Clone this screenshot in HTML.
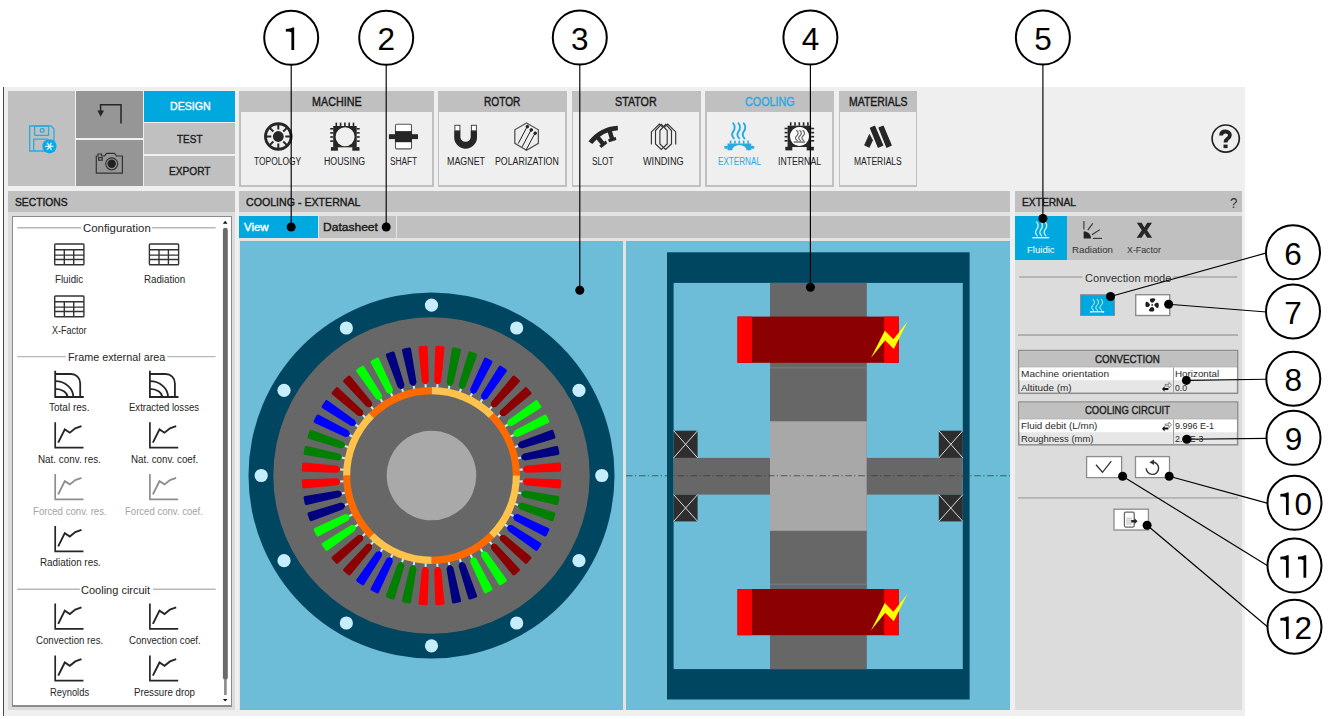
<!DOCTYPE html>
<html><head><meta charset="utf-8"><style>
html,body{margin:0;padding:0;background:#fff;width:1339px;height:719px;overflow:hidden;}
body{position:relative;font-family:"Liberation Sans",sans-serif;}
body>div{position:absolute;}
svg text{font-family:"Liberation Sans",sans-serif;}
</style></head><body>
<div style="left:3px;top:87px;width:1px;height:629px;background:#474747;"></div><div style="left:4px;top:87px;width:1241px;height:629px;background:#efefef;"></div><div style="left:8px;top:90.5px;width:67px;height:95.5px;background:#c0c0c0;"></div><div style="left:76px;top:90.5px;width:67px;height:47px;background:#969696;"></div><div style="left:76px;top:139.5px;width:67px;height:46.5px;background:#969696;"></div><div style="left:144px;top:90.5px;width:91px;height:31px;background:#00a8e0;"></div><div style="left:144px;top:123px;width:91px;height:30.5px;background:#c0c0c0;"></div><div style="left:144px;top:155.5px;width:91px;height:30.5px;background:#c0c0c0;"></div><div style="left:169.90px;top:101.21px;font-size:11.8px;line-height:11.8px;color:#ffffff;font-weight:normal;white-space:nowrap;transform-origin:0 0;transform:scaleX(0.8969);-webkit-text-stroke:0.4px #ffffff;">DESIGN</div><div style="left:177.00px;top:133.61px;font-size:11.8px;line-height:11.8px;color:#1a1a1a;font-weight:normal;white-space:nowrap;transform-origin:0 0;transform:scaleX(0.8449);-webkit-text-stroke:0.4px #1a1a1a;">TEST</div><div style="left:169.40px;top:165.81px;font-size:11.8px;line-height:11.8px;color:#1a1a1a;font-weight:normal;white-space:nowrap;transform-origin:0 0;transform:scaleX(0.8589);-webkit-text-stroke:0.4px #1a1a1a;">EXPORT</div><div style="left:239px;top:90.5px;width:194.5px;height:96px;background:#c0c0c0;"></div><div style="left:240.5px;top:112px;width:191.5px;height:73px;background:#efefef;"></div><div style="left:311.60px;top:96.04px;font-size:12px;line-height:12px;color:#1a1a1a;font-weight:normal;white-space:nowrap;transform-origin:0 0;transform:scaleX(0.8964);-webkit-text-stroke:0.4px #1a1a1a;">MACHINE</div><div style="left:437.5px;top:90.5px;width:129.0px;height:96px;background:#c0c0c0;"></div><div style="left:439.0px;top:112px;width:126.0px;height:73px;background:#efefef;"></div><div style="left:484.00px;top:96.04px;font-size:12px;line-height:12px;color:#1a1a1a;font-weight:normal;white-space:nowrap;transform-origin:0 0;transform:scaleX(0.8424);-webkit-text-stroke:0.4px #1a1a1a;">ROTOR</div><div style="left:571.5px;top:90.5px;width:129.0px;height:96px;background:#c0c0c0;"></div><div style="left:573.0px;top:112px;width:126.0px;height:73px;background:#efefef;"></div><div style="left:614.70px;top:96.04px;font-size:12px;line-height:12px;color:#1a1a1a;font-weight:normal;white-space:nowrap;transform-origin:0 0;transform:scaleX(0.8935);-webkit-text-stroke:0.4px #1a1a1a;">STATOR</div><div style="left:705px;top:90.5px;width:128.5px;height:96px;background:#c0c0c0;"></div><div style="left:706.5px;top:112px;width:125.5px;height:73px;background:#efefef;"></div><div style="left:744.60px;top:96.04px;font-size:12px;line-height:12px;color:#29abe2;font-weight:normal;white-space:nowrap;transform-origin:0 0;transform:scaleX(0.8981);-webkit-text-stroke:0.4px #29abe2;">COOLING</div><div style="left:838.5px;top:90.5px;width:78.5px;height:96px;background:#c0c0c0;"></div><div style="left:840.0px;top:112px;width:75.5px;height:73px;background:#efefef;"></div><div style="left:848.80px;top:96.04px;font-size:12px;line-height:12px;color:#1a1a1a;font-weight:normal;white-space:nowrap;transform-origin:0 0;transform:scaleX(0.8716);-webkit-text-stroke:0.4px #1a1a1a;">MATERIALS</div><div style="left:254.20px;top:156.73px;font-size:10px;line-height:10px;color:#222;font-weight:normal;white-space:nowrap;transform-origin:0 0;transform:scaleX(0.8441);">TOPOLOGY</div><div style="left:323.90px;top:156.73px;font-size:10px;line-height:10px;color:#222;font-weight:normal;white-space:nowrap;transform-origin:0 0;transform:scaleX(0.8808);">HOUSING</div><div style="left:389.70px;top:156.73px;font-size:10px;line-height:10px;color:#222;font-weight:normal;white-space:nowrap;transform-origin:0 0;transform:scaleX(0.8264);">SHAFT</div><div style="left:446.80px;top:156.73px;font-size:10px;line-height:10px;color:#222;font-weight:normal;white-space:nowrap;transform-origin:0 0;transform:scaleX(0.8882);">MAGNET</div><div style="left:494.80px;top:156.73px;font-size:10px;line-height:10px;color:#222;font-weight:normal;white-space:nowrap;transform-origin:0 0;transform:scaleX(0.8787);">POLARIZATION</div><div style="left:591.80px;top:156.73px;font-size:10px;line-height:10px;color:#222;font-weight:normal;white-space:nowrap;transform-origin:0 0;transform:scaleX(0.8228);">SLOT</div><div style="left:642.90px;top:156.73px;font-size:10px;line-height:10px;color:#222;font-weight:normal;white-space:nowrap;transform-origin:0 0;transform:scaleX(0.9136);">WINDING</div><div style="left:717.70px;top:156.73px;font-size:10px;line-height:10px;color:#29abe2;font-weight:normal;white-space:nowrap;transform-origin:0 0;transform:scaleX(0.8134);">EXTERNAL</div><div style="left:778.20px;top:156.73px;font-size:10px;line-height:10px;color:#222;font-weight:normal;white-space:nowrap;transform-origin:0 0;transform:scaleX(0.8699);">INTERNAL</div><div style="left:854.20px;top:156.73px;font-size:10px;line-height:10px;color:#222;font-weight:normal;white-space:nowrap;transform-origin:0 0;transform:scaleX(0.8548);">MATERIALS</div><svg style="position:absolute;left:1195px;top:110px" width="60" height="60" viewBox="1195 110 60 60"><circle cx="1225.7" cy="138.6" r="13.6" fill="none" stroke="#222" stroke-width="1.7"/><path d="M1221.1,135.4 C1221.1,132.8 1222.9,131.5 1225.5,131.5 C1228.3,131.5 1229.9,133.1 1229.9,135.2 C1229.9,137.3 1228.4,138.2 1227.1,139.1 C1226,139.9 1225.6,140.6 1225.6,142.6" fill="none" stroke="#222" stroke-width="3.8"/><rect x="1223.5" y="144.6" width="4.1" height="3.5" fill="#222"/></svg><div style="left:8px;top:191px;width:227px;height:21px;background:#c0c0c0;"></div><div style="left:14.60px;top:196.77px;font-size:11.5px;line-height:11.5px;color:#1a1a1a;font-weight:normal;white-space:nowrap;transform-origin:0 0;transform:scaleX(0.8949);-webkit-text-stroke:0.4px #1a1a1a;">SECTIONS</div><div style="left:8px;top:212px;width:227px;height:498px;background:#dcdcdc;"></div><div style="left:11.5px;top:215.5px;width:220.5px;height:491px;background:#8c8c8c;"></div><div style="left:13px;top:217px;width:217.5px;height:488px;background:#ffffff;"></div><div style="left:239px;top:191px;width:771px;height:21px;background:#c0c0c0;"></div><div style="left:245.60px;top:197.05px;font-size:11.4px;line-height:11.4px;color:#1a1a1a;font-weight:normal;white-space:nowrap;transform-origin:0 0;transform:scaleX(0.9326);-webkit-text-stroke:0.4px #1a1a1a;">COOLING - EXTERNAL</div><div style="left:239px;top:212px;width:771px;height:3.5px;background:#e3e3e3;"></div><div style="left:239px;top:215.5px;width:771px;height:22.5px;background:#c0c0c0;"></div><div style="left:239px;top:215.5px;width:78.5px;height:22.5px;background:#00a8e0;"></div><div style="left:317.5px;top:215.5px;width:1px;height:22.5px;background:#e4e4e4;"></div><div style="left:395.5px;top:215.5px;width:1.5px;height:22.5px;background:#e4e4e4;"></div><div style="left:244.40px;top:221.71px;font-size:11.8px;line-height:11.8px;color:#ffffff;font-weight:normal;white-space:nowrap;transform-origin:0 0;transform:scaleX(0.9715);-webkit-text-stroke:0.4px #ffffff;">View</div><div style="left:323.20px;top:221.71px;font-size:11.8px;line-height:11.8px;color:#1a1a1a;font-weight:normal;white-space:nowrap;transform-origin:0 0;transform:scaleX(1.0202);-webkit-text-stroke:0.4px #1a1a1a;">Datasheet</div><div style="left:239px;top:238px;width:771px;height:472px;background:#e3e3e3;"></div><div style="left:239.5px;top:240.5px;width:383.5px;height:469.5px;background:#6dbcd8;"></div><div style="left:626px;top:240.5px;width:384px;height:469.5px;background:#6dbcd8;"></div><div style="left:1015px;top:191px;width:227px;height:21px;background:#c0c0c0;"></div><div style="left:1021.70px;top:197.05px;font-size:11.4px;line-height:11.4px;color:#1a1a1a;font-weight:normal;white-space:nowrap;transform-origin:0 0;transform:scaleX(0.8980);-webkit-text-stroke:0.4px #1a1a1a;">EXTERNAL</div><div style="left:1229.90px;top:195.40px;font-size:15px;line-height:15px;color:#333;font-weight:normal;white-space:nowrap;transform-origin:0 0;transform:scaleX(0.8875);">?</div><div style="left:1015px;top:212px;width:227px;height:3.5px;background:#e3e3e3;"></div><div style="left:1015px;top:215.5px;width:227px;height:44px;background:#c0c0c0;"></div><div style="left:1015px;top:215.5px;width:52px;height:44px;background:#00a8e0;"></div><div style="left:1015px;top:259.5px;width:227px;height:450.5px;background:#dcdcdc;"></div><svg style="position:absolute;left:0px;top:85px" width="1000" height="110" viewBox="0 85 1000 110"><g fill="none" stroke="#29abe2" stroke-width="1.3"><path d="M29.7,126 H51 L54,129 V151 H29.7 Z"/><rect x="34.6" y="126" width="14" height="9.3" rx="0.6"/><rect x="40.4" y="128.6" width="3.6" height="3.6" rx="1"/><path d="M33.7,151 V139.2 H48"/></g><circle cx="49.4" cy="146.3" r="7.1" fill="#06a9ec"/><g stroke="#d6f2ff" stroke-width="1.35"><path d="M45.3,146.3 H53.5 M47.3,142.8 L51.5,149.8 M47.3,149.8 L51.5,142.8"/></g><path d="M121,123.5 V104.8 H100.6 V111" fill="none" stroke="#262626" stroke-width="1.5"/><path d="M97.4,110.5 H104 L100.7,116.8 Z" fill="#262626"/><g fill="none" stroke="#333" stroke-width="1.2"><path d="M96.3,156 H98 V154 H101.5 V156 H104.5 L106.5,153.4 H114.5 L116.5,156 H122.4 V173.2 H96.3 Z"/><rect x="98.6" y="157.6" width="3.6" height="2.6"/><circle cx="111.7" cy="163.8" r="6"/></g><circle cx="111.7" cy="163.8" r="4.2" fill="#222"/><circle cx="278.3" cy="136.5" r="12.8" fill="none" stroke="#262626" stroke-width="2.9"/><circle cx="278.3" cy="136.5" r="5.4" fill="#262626"/><g stroke="#262626" stroke-width="2"><line x1="278.30" y1="129.50" x2="278.30" y2="124.70"/><line x1="283.25" y1="131.55" x2="286.64" y2="128.16"/><line x1="285.30" y1="136.50" x2="290.10" y2="136.50"/><line x1="283.25" y1="141.45" x2="286.64" y2="144.84"/><line x1="278.30" y1="143.50" x2="278.30" y2="148.30"/><line x1="273.35" y1="141.45" x2="269.96" y2="144.84"/><line x1="271.30" y1="136.50" x2="266.50" y2="136.50"/><line x1="273.35" y1="131.55" x2="269.96" y2="128.16"/></g><rect x="333.20000000000005" y="126.00000000000001" width="23.5" height="21.299999999999997" fill="#262626"/><rect x="330.90000000000003" y="147.10000000000002" width="7" height="3.6" fill="#262626"/><rect x="352.30000000000007" y="147.10000000000002" width="7.2" height="3.6" fill="#262626"/><circle cx="345.1" cy="136.8" r="9.5" fill="#efefef"/><g stroke="#262626" stroke-width="1.6"><line x1="336.30" y1="122.60000000000001" x2="336.30" y2="126.00000000000001"/><line x1="340.60" y1="122.60000000000001" x2="340.60" y2="126.00000000000001"/><line x1="344.90" y1="122.60000000000001" x2="344.90" y2="126.00000000000001"/><line x1="349.20" y1="122.60000000000001" x2="349.20" y2="126.00000000000001"/><line x1="353.50" y1="122.60000000000001" x2="353.50" y2="126.00000000000001"/><line x1="330.20000000000005" y1="128.80" x2="333.20000000000005" y2="128.80"/><line x1="356.70000000000005" y1="128.80" x2="359.70000000000005" y2="128.80"/><line x1="330.20000000000005" y1="132.90" x2="333.20000000000005" y2="132.90"/><line x1="356.70000000000005" y1="132.90" x2="359.70000000000005" y2="132.90"/><line x1="330.20000000000005" y1="137.00" x2="333.20000000000005" y2="137.00"/><line x1="356.70000000000005" y1="137.00" x2="359.70000000000005" y2="137.00"/><line x1="330.20000000000005" y1="141.10" x2="333.20000000000005" y2="141.10"/><line x1="356.70000000000005" y1="141.10" x2="359.70000000000005" y2="141.10"/></g><rect x="395.5" y="124.2" width="16" height="24.7" rx="1.2" fill="#fff" stroke="#555" stroke-width="1.1"/><rect x="395" y="131.1" width="16.9" height="11.1" fill="#262626"/><rect x="388.9" y="134.2" width="29.1" height="4.9" fill="#262626"/><path d="M454.2,130.8 V137.3 A11.4,11.4 0 0 0 477,137.3 V130.8 H470.7 V137.3 A5.2,5.2 0 0 1 460.4,137.3 V130.8 Z" fill="#262626"/><rect x="454.9" y="125.3" width="5" height="5.5" fill="#fff" stroke="#444" stroke-width="1"/><rect x="471.4" y="125.3" width="5" height="5.5" fill="#fff" stroke="#444" stroke-width="1"/><polygon points="526.60,123.00 538.38,129.80 538.38,143.40 526.60,150.20 514.82,143.40 514.82,129.80" fill="none" stroke="#555" stroke-width="1.3"/><g stroke="#222" stroke-width="1"><line x1="518.20" y1="143.60" x2="527.20" y2="126.60"/><circle cx="527.40" cy="126.60" r="1.3" fill="#222"/><line x1="522.10" y1="146.90" x2="531.10" y2="129.90"/><circle cx="531.30" cy="129.90" r="1.3" fill="#222"/><line x1="526.00" y1="150.20" x2="535.00" y2="133.20"/><circle cx="535.20" cy="133.20" r="1.3" fill="#222"/></g><path d="M588.53,141.29 A39.4,39.4 0 0 1 617.73,125.67 L618.00,130.36 A34.7,34.7 0 0 0 592.29,144.12 Z" fill="#262626"/><path d="M596.04,138.71 L600.74,144.56 L599.26,145.75 L601.37,147.90 L607.30,143.14 L605.65,140.61 L604.17,141.80 L599.47,135.95 Z" fill="#262626"/><path d="M607.58,131.67 L609.76,138.85 L607.94,139.40 L609.10,142.18 L616.37,139.97 L615.78,137.02 L613.97,137.57 L611.79,130.39 Z" fill="#262626"/><g fill="none" stroke="#333" stroke-width="1.15" stroke-linejoin="miter"><path d="M651.4,144.4 V131.9 L659.4,124 L662.6,127.2"/><path d="M675.7,144.4 V131.9 L667.7,124 L664.5,127.2"/><path d="M661.4,124.4 L667.2,130.6 V143.9 L661.3,149.5 L655.5,143.9 V130.6 Z"/><path d="M665.7,124.4 L671.5,130.6 V143.9 L665.6,149.5 L659.9,143.9 V130.6 Z"/></g><path d="M733.20,123.2 C735.40,126.24 735.10,128.67 733.40,131.10 C731.70,133.54 731.30,135.66 733.90,138.40" fill="none" stroke="#29abe2" stroke-width="1.9" stroke-linecap="round"/><path d="M738.50,123.2 C740.70,126.24 740.40,128.67 738.70,131.10 C737.00,133.54 736.60,135.66 739.20,138.40" fill="none" stroke="#29abe2" stroke-width="1.9" stroke-linecap="round"/><path d="M743.80,123.2 C746.00,126.24 745.70,128.67 744.00,131.10 C742.30,133.54 741.90,135.66 744.50,138.40" fill="none" stroke="#29abe2" stroke-width="1.9" stroke-linecap="round"/><path d="M727.5,143.4 H751.2 V150.3 H746.6 A7.2,5.4 0 0 0 732.2,150.3 H727.5 Z" fill="#29abe2"/><rect x="724.4" y="145.9" width="3.4" height="2.8" fill="#29abe2"/><rect x="751" y="145.9" width="3.2" height="2.8" fill="#29abe2"/><rect x="729.80" y="140.6" width="1.6" height="3" fill="#29abe2"/><rect x="734.15" y="140.6" width="1.6" height="3" fill="#29abe2"/><rect x="738.50" y="140.6" width="1.6" height="3" fill="#29abe2"/><rect x="742.85" y="140.6" width="1.6" height="3" fill="#29abe2"/><rect x="747.20" y="140.6" width="1.6" height="3" fill="#29abe2"/><rect x="787.6" y="125.7" width="23.5" height="21.299999999999997" fill="#262626"/><rect x="785.3000000000001" y="146.8" width="7" height="3.6" fill="#262626"/><rect x="806.7" y="146.8" width="7.2" height="3.6" fill="#262626"/><circle cx="799.5" cy="136.5" r="9.5" fill="#efefef"/><g stroke="#262626" stroke-width="1.6"><line x1="790.70" y1="122.3" x2="790.70" y2="125.7"/><line x1="795.00" y1="122.3" x2="795.00" y2="125.7"/><line x1="799.30" y1="122.3" x2="799.30" y2="125.7"/><line x1="803.60" y1="122.3" x2="803.60" y2="125.7"/><line x1="807.90" y1="122.3" x2="807.90" y2="125.7"/><line x1="784.6" y1="128.50" x2="787.6" y2="128.50"/><line x1="811.1" y1="128.50" x2="814.1" y2="128.50"/><line x1="784.6" y1="132.60" x2="787.6" y2="132.60"/><line x1="811.1" y1="132.60" x2="814.1" y2="132.60"/><line x1="784.6" y1="136.70" x2="787.6" y2="136.70"/><line x1="811.1" y1="136.70" x2="814.1" y2="136.70"/><line x1="784.6" y1="140.80" x2="787.6" y2="140.80"/><line x1="811.1" y1="140.80" x2="814.1" y2="140.80"/></g><circle cx="799.5" cy="136.3" r="9.2" fill="#fafafa"/><path d="M796.60,130.5 C798.80,132.50 798.50,134.10 796.80,135.70 C795.10,137.30 794.70,138.70 797.30,140.50" fill="none" stroke="#6a6a6a" stroke-width="1.2" stroke-linecap="round"/><path d="M799.80,130.5 C802.00,132.50 801.70,134.10 800.00,135.70 C798.30,137.30 797.90,138.70 800.50,140.50" fill="none" stroke="#6a6a6a" stroke-width="1.2" stroke-linecap="round"/><path d="M803.00,130.5 C805.20,132.50 804.90,134.10 803.20,135.70 C801.50,137.30 801.10,138.70 803.70,140.50" fill="none" stroke="#6a6a6a" stroke-width="1.2" stroke-linecap="round"/><rect x="793.8" y="141.2" width="11.4" height="1.6" fill="#7a7a7a"/><path d="M864.6,145.2 L869.4,134.4 L872.5,140.2 L869.3,147.3 Z" fill="#262626" stroke="#262626" stroke-width="0.8" stroke-linejoin="round"/><path d="M870.6,128.2 L874.6,126.4 L882.6,145.2 L878.3,147.1 Z" fill="#262626" stroke="#262626" stroke-width="1.4" stroke-linejoin="round"/><path d="M879.2,128 L883.1,126.3 L891.1,145.2 L886.8,147.1 Z" fill="#262626" stroke="#262626" stroke-width="1.4" stroke-linejoin="round"/></svg><svg style="position:absolute;left:0px;top:210px" width="240" height="500" viewBox="0 210 240 500"><line x1="17.2" y1="227.7" x2="81.2" y2="227.7" stroke="#b8b8b8" stroke-width="1.4"/><line x1="151.8" y1="227.7" x2="215.6" y2="227.7" stroke="#b8b8b8" stroke-width="1.4"/><line x1="17.2" y1="356.6" x2="66" y2="356.6" stroke="#b8b8b8" stroke-width="1.4"/><line x1="167.2" y1="356.6" x2="215.6" y2="356.6" stroke="#b8b8b8" stroke-width="1.4"/><line x1="17.2" y1="589.3" x2="79.8" y2="589.3" stroke="#b8b8b8" stroke-width="1.4"/><line x1="153" y1="589.3" x2="215.6" y2="589.3" stroke="#b8b8b8" stroke-width="1.4"/><g fill="none" stroke="#333" stroke-width="1.4"><rect x="54.699999999999996" y="244" width="29.2" height="20.7" rx="0.8"/><path d="M54.699999999999996,249.8 H83.89999999999999 M54.699999999999996,255.1 H83.89999999999999 M54.699999999999996,259.5 H83.89999999999999 M64.3,249.8 V264.7 M73.69999999999999,249.8 V264.7"/></g><g fill="none" stroke="#333" stroke-width="1.4"><rect x="149.4" y="244" width="29.2" height="20.7" rx="0.8"/><path d="M149.4,249.8 H178.6 M149.4,255.1 H178.6 M149.4,259.5 H178.6 M159.0,249.8 V264.7 M168.4,249.8 V264.7"/></g><g fill="none" stroke="#333" stroke-width="1.4"><rect x="54.699999999999996" y="296" width="29.2" height="20.7" rx="0.8"/><path d="M54.699999999999996,301.8 H83.89999999999999 M54.699999999999996,307.1 H83.89999999999999 M54.699999999999996,311.5 H83.89999999999999 M64.3,301.8 V316.7 M73.69999999999999,301.8 V316.7"/></g><g fill="none" stroke="#262626" stroke-width="1.8"><path d="M55.199999999999996,370.7 V397.0 H83.8"/><path d="M55.199999999999996,374.0 H71.0 A9.2,9.2 0 0 1 80.19999999999999,383.2 V397.0"/><path d="M55.199999999999996,381.2 A18.1,15.8 0 0 1 73.3,397.0"/><path d="M55.199999999999996,388.8 A12.3,8.2 0 0 1 67.5,397.0"/></g><g fill="none" stroke="#262626" stroke-width="1.8"><path d="M149.9,370.7 V397.0 H178.5"/><path d="M149.9,374.0 H165.70000000000002 A9.2,9.2 0 0 1 174.9,383.2 V397.0"/><path d="M149.9,381.2 A18.1,15.8 0 0 1 168.0,397.0"/><path d="M149.9,388.8 A12.3,8.2 0 0 1 162.20000000000002,397.0"/></g><g fill="none" stroke="#262626" stroke-width="1.7"><path d="M55.199999999999996,422.3 V447.6 H83.5"/><path d="M58.199999999999996,442.6 L64.8,429.40000000000003 L69.8,432.7 L75.3,428.3 L81.5,426.1" stroke-width="1.9"/></g><g fill="none" stroke="#262626" stroke-width="1.7"><path d="M149.9,422.3 V447.6 H178.20000000000002"/><path d="M152.9,442.6 L159.5,429.40000000000003 L164.5,432.7 L170.0,428.3 L176.20000000000002,426.1" stroke-width="1.9"/></g><g fill="none" stroke="#8e8e8e" stroke-width="1.7"><path d="M55.199999999999996,474 V499.3 H83.5"/><path d="M58.199999999999996,494.3 L64.8,481.1 L69.8,484.4 L75.3,480 L81.5,477.8" stroke-width="1.9"/></g><g fill="none" stroke="#8e8e8e" stroke-width="1.7"><path d="M149.9,474 V499.3 H178.20000000000002"/><path d="M152.9,494.3 L159.5,481.1 L164.5,484.4 L170.0,480 L176.20000000000002,477.8" stroke-width="1.9"/></g><g fill="none" stroke="#262626" stroke-width="1.7"><path d="M55.199999999999996,526.1 V551.4 H83.5"/><path d="M58.199999999999996,546.4 L64.8,533.2 L69.8,536.5 L75.3,532.1 L81.5,529.9" stroke-width="1.9"/></g><g fill="none" stroke="#262626" stroke-width="1.7"><path d="M55.199999999999996,603.6 V628.9 H83.5"/><path d="M58.199999999999996,623.9 L64.8,610.7 L69.8,614.0 L75.3,609.6 L81.5,607.4" stroke-width="1.9"/></g><g fill="none" stroke="#262626" stroke-width="1.7"><path d="M149.9,603.6 V628.9 H178.20000000000002"/><path d="M152.9,623.9 L159.5,610.7 L164.5,614.0 L170.0,609.6 L176.20000000000002,607.4" stroke-width="1.9"/></g><g fill="none" stroke="#262626" stroke-width="1.7"><path d="M55.199999999999996,655.4 V680.6999999999999 H83.5"/><path d="M58.199999999999996,675.6999999999999 L64.8,662.5 L69.8,665.8 L75.3,661.4 L81.5,659.1999999999999" stroke-width="1.9"/></g><g fill="none" stroke="#262626" stroke-width="1.7"><path d="M149.9,655.4 V680.6999999999999 H178.20000000000002"/><path d="M152.9,675.6999999999999 L159.5,662.5 L164.5,665.8 L170.0,661.4 L176.20000000000002,659.1999999999999" stroke-width="1.9"/></g><path d="M225.2,220.8 L222.9,223.7 H227.5 Z" fill="#111"/><rect x="222.9" y="227.7" width="4.9" height="452.3" rx="2.4" fill="#6b6b6b"/><rect x="224.1" y="679" width="2.6" height="16" fill="#8a8a8a"/><path d="M225.2,701.5 L222.9,698.9 H227.5 Z" fill="#111"/></svg><div style="left:82.70px;top:223.22px;font-size:11.2px;line-height:11.2px;color:#262626;font-weight:normal;white-space:nowrap;transform-origin:0 0;transform:scaleX(1.0177);">Configuration</div><div style="left:67.50px;top:351.82px;font-size:11.2px;line-height:11.2px;color:#262626;font-weight:normal;white-space:nowrap;transform-origin:0 0;transform:scaleX(0.9654);">Frame external area</div><div style="left:81.40px;top:584.52px;font-size:11.2px;line-height:11.2px;color:#262626;font-weight:normal;white-space:nowrap;transform-origin:0 0;transform:scaleX(0.9838);">Cooling circuit</div><div style="left:55.00px;top:274.67px;font-size:10.2px;line-height:10.2px;color:#262626;font-weight:normal;white-space:nowrap;transform-origin:0 0;transform:scaleX(0.9542);">Fluidic</div><div style="left:143.50px;top:274.67px;font-size:10.2px;line-height:10.2px;color:#262626;font-weight:normal;white-space:nowrap;transform-origin:0 0;transform:scaleX(0.9557);">Radiation</div><div style="left:52.00px;top:326.27px;font-size:10.2px;line-height:10.2px;color:#262626;font-weight:normal;white-space:nowrap;transform-origin:0 0;transform:scaleX(0.8798);">X-Factor</div><div style="left:49.40px;top:403.27px;font-size:10.2px;line-height:10.2px;color:#262626;font-weight:normal;white-space:nowrap;transform-origin:0 0;transform:scaleX(0.9827);">Total res.</div><div style="left:128.70px;top:403.27px;font-size:10.2px;line-height:10.2px;color:#262626;font-weight:normal;white-space:nowrap;transform-origin:0 0;transform:scaleX(0.9364);">Extracted losses</div><div style="left:38.00px;top:454.87px;font-size:10.2px;line-height:10.2px;color:#262626;font-weight:normal;white-space:nowrap;transform-origin:0 0;transform:scaleX(0.9674);">Nat. conv. res.</div><div style="left:130.80px;top:454.87px;font-size:10.2px;line-height:10.2px;color:#262626;font-weight:normal;white-space:nowrap;transform-origin:0 0;transform:scaleX(0.9596);">Nat. conv. coef.</div><div style="left:33.00px;top:506.57px;font-size:10.2px;line-height:10.2px;color:#a3a3a3;font-weight:normal;white-space:nowrap;transform-origin:0 0;transform:scaleX(0.9454);">Forced conv. res.</div><div style="left:125.20px;top:506.57px;font-size:10.2px;line-height:10.2px;color:#a3a3a3;font-weight:normal;white-space:nowrap;transform-origin:0 0;transform:scaleX(0.9378);">Forced conv. coef.</div><div style="left:39.50px;top:558.47px;font-size:10.2px;line-height:10.2px;color:#262626;font-weight:normal;white-space:nowrap;transform-origin:0 0;transform:scaleX(0.9673);">Radiation res.</div><div style="left:36.20px;top:636.17px;font-size:10.2px;line-height:10.2px;color:#262626;font-weight:normal;white-space:nowrap;transform-origin:0 0;transform:scaleX(0.9493);">Convection res.</div><div style="left:128.50px;top:636.17px;font-size:10.2px;line-height:10.2px;color:#262626;font-weight:normal;white-space:nowrap;transform-origin:0 0;transform:scaleX(0.9447);">Convection coef.</div><div style="left:50.00px;top:687.57px;font-size:10.2px;line-height:10.2px;color:#262626;font-weight:normal;white-space:nowrap;transform-origin:0 0;transform:scaleX(0.9203);">Reynolds</div><div style="left:133.50px;top:687.57px;font-size:10.2px;line-height:10.2px;color:#262626;font-weight:normal;white-space:nowrap;transform-origin:0 0;transform:scaleX(0.9531);">Pressure drop</div><svg style="position:absolute;left:239.5px;top:240.5px" width="383.5" height="469.5" viewBox="239.5 240.5 383.5 469.5"><circle cx="431" cy="475" r="183" fill="#004660"/><circle cx="431" cy="475" r="158.2" fill="#676767"/><circle cx="431.00" cy="304.70" r="6.6" fill="#c6edfb"/><circle cx="516.15" cy="327.52" r="6.6" fill="#c6edfb"/><circle cx="578.48" cy="389.85" r="6.6" fill="#c6edfb"/><circle cx="601.30" cy="475.00" r="6.6" fill="#c6edfb"/><circle cx="578.48" cy="560.15" r="6.6" fill="#c6edfb"/><circle cx="516.15" cy="622.48" r="6.6" fill="#c6edfb"/><circle cx="431.00" cy="645.30" r="6.6" fill="#c6edfb"/><circle cx="345.85" cy="622.48" r="6.6" fill="#c6edfb"/><circle cx="283.52" cy="560.15" r="6.6" fill="#c6edfb"/><circle cx="260.70" cy="475.00" r="6.6" fill="#c6edfb"/><circle cx="283.52" cy="389.85" r="6.6" fill="#c6edfb"/><circle cx="345.85" cy="327.52" r="6.6" fill="#c6edfb"/><g transform="translate(431,475) rotate(3.75)"><rect x="-1" y="-92" width="2" height="5" fill="#c8ecf8"/><path d="M-1.3,-91.6 L-3.5,-94.4 L-4.6,-128 Q-4.7,-129.8 -3,-129.8 L3,-129.8 Q4.7,-129.8 4.6,-128 L3.5,-94.4 L1.3,-91.6 Z" fill="#ff0000"/></g><g transform="translate(431,475) rotate(11.25)"><rect x="-1" y="-92" width="2" height="5" fill="#c8ecf8"/><path d="M-1.3,-91.6 L-3.5,-94.4 L-4.6,-128 Q-4.7,-129.8 -3,-129.8 L3,-129.8 Q4.7,-129.8 4.6,-128 L3.5,-94.4 L1.3,-91.6 Z" fill="#008000"/></g><g transform="translate(431,475) rotate(18.75)"><rect x="-1" y="-92" width="2" height="5" fill="#c8ecf8"/><path d="M-1.3,-91.6 L-3.5,-94.4 L-4.6,-128 Q-4.7,-129.8 -3,-129.8 L3,-129.8 Q4.7,-129.8 4.6,-128 L3.5,-94.4 L1.3,-91.6 Z" fill="#008000"/></g><g transform="translate(431,475) rotate(26.25)"><rect x="-1" y="-92" width="2" height="5" fill="#c8ecf8"/><path d="M-1.3,-91.6 L-3.5,-94.4 L-4.6,-128 Q-4.7,-129.8 -3,-129.8 L3,-129.8 Q4.7,-129.8 4.6,-128 L3.5,-94.4 L1.3,-91.6 Z" fill="#0000ff"/></g><g transform="translate(431,475) rotate(33.75)"><rect x="-1" y="-92" width="2" height="5" fill="#c8ecf8"/><path d="M-1.3,-91.6 L-3.5,-94.4 L-4.6,-128 Q-4.7,-129.8 -3,-129.8 L3,-129.8 Q4.7,-129.8 4.6,-128 L3.5,-94.4 L1.3,-91.6 Z" fill="#0000ff"/></g><g transform="translate(431,475) rotate(41.25)"><rect x="-1" y="-92" width="2" height="5" fill="#c8ecf8"/><path d="M-1.3,-91.6 L-3.5,-94.4 L-4.6,-128 Q-4.7,-129.8 -3,-129.8 L3,-129.8 Q4.7,-129.8 4.6,-128 L3.5,-94.4 L1.3,-91.6 Z" fill="#8b0000"/></g><g transform="translate(431,475) rotate(48.75)"><rect x="-1" y="-92" width="2" height="5" fill="#c8ecf8"/><path d="M-1.3,-91.6 L-3.5,-94.4 L-4.6,-128 Q-4.7,-129.8 -3,-129.8 L3,-129.8 Q4.7,-129.8 4.6,-128 L3.5,-94.4 L1.3,-91.6 Z" fill="#8b0000"/></g><g transform="translate(431,475) rotate(56.25)"><rect x="-1" y="-92" width="2" height="5" fill="#c8ecf8"/><path d="M-1.3,-91.6 L-3.5,-94.4 L-4.6,-128 Q-4.7,-129.8 -3,-129.8 L3,-129.8 Q4.7,-129.8 4.6,-128 L3.5,-94.4 L1.3,-91.6 Z" fill="#00ff00"/></g><g transform="translate(431,475) rotate(63.75)"><rect x="-1" y="-92" width="2" height="5" fill="#c8ecf8"/><path d="M-1.3,-91.6 L-3.5,-94.4 L-4.6,-128 Q-4.7,-129.8 -3,-129.8 L3,-129.8 Q4.7,-129.8 4.6,-128 L3.5,-94.4 L1.3,-91.6 Z" fill="#00ff00"/></g><g transform="translate(431,475) rotate(71.25)"><rect x="-1" y="-92" width="2" height="5" fill="#c8ecf8"/><path d="M-1.3,-91.6 L-3.5,-94.4 L-4.6,-128 Q-4.7,-129.8 -3,-129.8 L3,-129.8 Q4.7,-129.8 4.6,-128 L3.5,-94.4 L1.3,-91.6 Z" fill="#000080"/></g><g transform="translate(431,475) rotate(78.75)"><rect x="-1" y="-92" width="2" height="5" fill="#c8ecf8"/><path d="M-1.3,-91.6 L-3.5,-94.4 L-4.6,-128 Q-4.7,-129.8 -3,-129.8 L3,-129.8 Q4.7,-129.8 4.6,-128 L3.5,-94.4 L1.3,-91.6 Z" fill="#000080"/></g><g transform="translate(431,475) rotate(86.25)"><rect x="-1" y="-92" width="2" height="5" fill="#c8ecf8"/><path d="M-1.3,-91.6 L-3.5,-94.4 L-4.6,-128 Q-4.7,-129.8 -3,-129.8 L3,-129.8 Q4.7,-129.8 4.6,-128 L3.5,-94.4 L1.3,-91.6 Z" fill="#ff0000"/></g><g transform="translate(431,475) rotate(93.75)"><rect x="-1" y="-92" width="2" height="5" fill="#c8ecf8"/><path d="M-1.3,-91.6 L-3.5,-94.4 L-4.6,-128 Q-4.7,-129.8 -3,-129.8 L3,-129.8 Q4.7,-129.8 4.6,-128 L3.5,-94.4 L1.3,-91.6 Z" fill="#ff0000"/></g><g transform="translate(431,475) rotate(101.25)"><rect x="-1" y="-92" width="2" height="5" fill="#c8ecf8"/><path d="M-1.3,-91.6 L-3.5,-94.4 L-4.6,-128 Q-4.7,-129.8 -3,-129.8 L3,-129.8 Q4.7,-129.8 4.6,-128 L3.5,-94.4 L1.3,-91.6 Z" fill="#008000"/></g><g transform="translate(431,475) rotate(108.75)"><rect x="-1" y="-92" width="2" height="5" fill="#c8ecf8"/><path d="M-1.3,-91.6 L-3.5,-94.4 L-4.6,-128 Q-4.7,-129.8 -3,-129.8 L3,-129.8 Q4.7,-129.8 4.6,-128 L3.5,-94.4 L1.3,-91.6 Z" fill="#008000"/></g><g transform="translate(431,475) rotate(116.25)"><rect x="-1" y="-92" width="2" height="5" fill="#c8ecf8"/><path d="M-1.3,-91.6 L-3.5,-94.4 L-4.6,-128 Q-4.7,-129.8 -3,-129.8 L3,-129.8 Q4.7,-129.8 4.6,-128 L3.5,-94.4 L1.3,-91.6 Z" fill="#0000ff"/></g><g transform="translate(431,475) rotate(123.75)"><rect x="-1" y="-92" width="2" height="5" fill="#c8ecf8"/><path d="M-1.3,-91.6 L-3.5,-94.4 L-4.6,-128 Q-4.7,-129.8 -3,-129.8 L3,-129.8 Q4.7,-129.8 4.6,-128 L3.5,-94.4 L1.3,-91.6 Z" fill="#0000ff"/></g><g transform="translate(431,475) rotate(131.25)"><rect x="-1" y="-92" width="2" height="5" fill="#c8ecf8"/><path d="M-1.3,-91.6 L-3.5,-94.4 L-4.6,-128 Q-4.7,-129.8 -3,-129.8 L3,-129.8 Q4.7,-129.8 4.6,-128 L3.5,-94.4 L1.3,-91.6 Z" fill="#8b0000"/></g><g transform="translate(431,475) rotate(138.75)"><rect x="-1" y="-92" width="2" height="5" fill="#c8ecf8"/><path d="M-1.3,-91.6 L-3.5,-94.4 L-4.6,-128 Q-4.7,-129.8 -3,-129.8 L3,-129.8 Q4.7,-129.8 4.6,-128 L3.5,-94.4 L1.3,-91.6 Z" fill="#8b0000"/></g><g transform="translate(431,475) rotate(146.25)"><rect x="-1" y="-92" width="2" height="5" fill="#c8ecf8"/><path d="M-1.3,-91.6 L-3.5,-94.4 L-4.6,-128 Q-4.7,-129.8 -3,-129.8 L3,-129.8 Q4.7,-129.8 4.6,-128 L3.5,-94.4 L1.3,-91.6 Z" fill="#00ff00"/></g><g transform="translate(431,475) rotate(153.75)"><rect x="-1" y="-92" width="2" height="5" fill="#c8ecf8"/><path d="M-1.3,-91.6 L-3.5,-94.4 L-4.6,-128 Q-4.7,-129.8 -3,-129.8 L3,-129.8 Q4.7,-129.8 4.6,-128 L3.5,-94.4 L1.3,-91.6 Z" fill="#00ff00"/></g><g transform="translate(431,475) rotate(161.25)"><rect x="-1" y="-92" width="2" height="5" fill="#c8ecf8"/><path d="M-1.3,-91.6 L-3.5,-94.4 L-4.6,-128 Q-4.7,-129.8 -3,-129.8 L3,-129.8 Q4.7,-129.8 4.6,-128 L3.5,-94.4 L1.3,-91.6 Z" fill="#000080"/></g><g transform="translate(431,475) rotate(168.75)"><rect x="-1" y="-92" width="2" height="5" fill="#c8ecf8"/><path d="M-1.3,-91.6 L-3.5,-94.4 L-4.6,-128 Q-4.7,-129.8 -3,-129.8 L3,-129.8 Q4.7,-129.8 4.6,-128 L3.5,-94.4 L1.3,-91.6 Z" fill="#000080"/></g><g transform="translate(431,475) rotate(176.25)"><rect x="-1" y="-92" width="2" height="5" fill="#c8ecf8"/><path d="M-1.3,-91.6 L-3.5,-94.4 L-4.6,-128 Q-4.7,-129.8 -3,-129.8 L3,-129.8 Q4.7,-129.8 4.6,-128 L3.5,-94.4 L1.3,-91.6 Z" fill="#ff0000"/></g><g transform="translate(431,475) rotate(183.75)"><rect x="-1" y="-92" width="2" height="5" fill="#c8ecf8"/><path d="M-1.3,-91.6 L-3.5,-94.4 L-4.6,-128 Q-4.7,-129.8 -3,-129.8 L3,-129.8 Q4.7,-129.8 4.6,-128 L3.5,-94.4 L1.3,-91.6 Z" fill="#ff0000"/></g><g transform="translate(431,475) rotate(191.25)"><rect x="-1" y="-92" width="2" height="5" fill="#c8ecf8"/><path d="M-1.3,-91.6 L-3.5,-94.4 L-4.6,-128 Q-4.7,-129.8 -3,-129.8 L3,-129.8 Q4.7,-129.8 4.6,-128 L3.5,-94.4 L1.3,-91.6 Z" fill="#008000"/></g><g transform="translate(431,475) rotate(198.75)"><rect x="-1" y="-92" width="2" height="5" fill="#c8ecf8"/><path d="M-1.3,-91.6 L-3.5,-94.4 L-4.6,-128 Q-4.7,-129.8 -3,-129.8 L3,-129.8 Q4.7,-129.8 4.6,-128 L3.5,-94.4 L1.3,-91.6 Z" fill="#008000"/></g><g transform="translate(431,475) rotate(206.25)"><rect x="-1" y="-92" width="2" height="5" fill="#c8ecf8"/><path d="M-1.3,-91.6 L-3.5,-94.4 L-4.6,-128 Q-4.7,-129.8 -3,-129.8 L3,-129.8 Q4.7,-129.8 4.6,-128 L3.5,-94.4 L1.3,-91.6 Z" fill="#0000ff"/></g><g transform="translate(431,475) rotate(213.75)"><rect x="-1" y="-92" width="2" height="5" fill="#c8ecf8"/><path d="M-1.3,-91.6 L-3.5,-94.4 L-4.6,-128 Q-4.7,-129.8 -3,-129.8 L3,-129.8 Q4.7,-129.8 4.6,-128 L3.5,-94.4 L1.3,-91.6 Z" fill="#0000ff"/></g><g transform="translate(431,475) rotate(221.25)"><rect x="-1" y="-92" width="2" height="5" fill="#c8ecf8"/><path d="M-1.3,-91.6 L-3.5,-94.4 L-4.6,-128 Q-4.7,-129.8 -3,-129.8 L3,-129.8 Q4.7,-129.8 4.6,-128 L3.5,-94.4 L1.3,-91.6 Z" fill="#8b0000"/></g><g transform="translate(431,475) rotate(228.75)"><rect x="-1" y="-92" width="2" height="5" fill="#c8ecf8"/><path d="M-1.3,-91.6 L-3.5,-94.4 L-4.6,-128 Q-4.7,-129.8 -3,-129.8 L3,-129.8 Q4.7,-129.8 4.6,-128 L3.5,-94.4 L1.3,-91.6 Z" fill="#8b0000"/></g><g transform="translate(431,475) rotate(236.25)"><rect x="-1" y="-92" width="2" height="5" fill="#c8ecf8"/><path d="M-1.3,-91.6 L-3.5,-94.4 L-4.6,-128 Q-4.7,-129.8 -3,-129.8 L3,-129.8 Q4.7,-129.8 4.6,-128 L3.5,-94.4 L1.3,-91.6 Z" fill="#00ff00"/></g><g transform="translate(431,475) rotate(243.75)"><rect x="-1" y="-92" width="2" height="5" fill="#c8ecf8"/><path d="M-1.3,-91.6 L-3.5,-94.4 L-4.6,-128 Q-4.7,-129.8 -3,-129.8 L3,-129.8 Q4.7,-129.8 4.6,-128 L3.5,-94.4 L1.3,-91.6 Z" fill="#00ff00"/></g><g transform="translate(431,475) rotate(251.25)"><rect x="-1" y="-92" width="2" height="5" fill="#c8ecf8"/><path d="M-1.3,-91.6 L-3.5,-94.4 L-4.6,-128 Q-4.7,-129.8 -3,-129.8 L3,-129.8 Q4.7,-129.8 4.6,-128 L3.5,-94.4 L1.3,-91.6 Z" fill="#000080"/></g><g transform="translate(431,475) rotate(258.75)"><rect x="-1" y="-92" width="2" height="5" fill="#c8ecf8"/><path d="M-1.3,-91.6 L-3.5,-94.4 L-4.6,-128 Q-4.7,-129.8 -3,-129.8 L3,-129.8 Q4.7,-129.8 4.6,-128 L3.5,-94.4 L1.3,-91.6 Z" fill="#000080"/></g><g transform="translate(431,475) rotate(266.25)"><rect x="-1" y="-92" width="2" height="5" fill="#c8ecf8"/><path d="M-1.3,-91.6 L-3.5,-94.4 L-4.6,-128 Q-4.7,-129.8 -3,-129.8 L3,-129.8 Q4.7,-129.8 4.6,-128 L3.5,-94.4 L1.3,-91.6 Z" fill="#ff0000"/></g><g transform="translate(431,475) rotate(273.75)"><rect x="-1" y="-92" width="2" height="5" fill="#c8ecf8"/><path d="M-1.3,-91.6 L-3.5,-94.4 L-4.6,-128 Q-4.7,-129.8 -3,-129.8 L3,-129.8 Q4.7,-129.8 4.6,-128 L3.5,-94.4 L1.3,-91.6 Z" fill="#ff0000"/></g><g transform="translate(431,475) rotate(281.25)"><rect x="-1" y="-92" width="2" height="5" fill="#c8ecf8"/><path d="M-1.3,-91.6 L-3.5,-94.4 L-4.6,-128 Q-4.7,-129.8 -3,-129.8 L3,-129.8 Q4.7,-129.8 4.6,-128 L3.5,-94.4 L1.3,-91.6 Z" fill="#008000"/></g><g transform="translate(431,475) rotate(288.75)"><rect x="-1" y="-92" width="2" height="5" fill="#c8ecf8"/><path d="M-1.3,-91.6 L-3.5,-94.4 L-4.6,-128 Q-4.7,-129.8 -3,-129.8 L3,-129.8 Q4.7,-129.8 4.6,-128 L3.5,-94.4 L1.3,-91.6 Z" fill="#008000"/></g><g transform="translate(431,475) rotate(296.25)"><rect x="-1" y="-92" width="2" height="5" fill="#c8ecf8"/><path d="M-1.3,-91.6 L-3.5,-94.4 L-4.6,-128 Q-4.7,-129.8 -3,-129.8 L3,-129.8 Q4.7,-129.8 4.6,-128 L3.5,-94.4 L1.3,-91.6 Z" fill="#0000ff"/></g><g transform="translate(431,475) rotate(303.75)"><rect x="-1" y="-92" width="2" height="5" fill="#c8ecf8"/><path d="M-1.3,-91.6 L-3.5,-94.4 L-4.6,-128 Q-4.7,-129.8 -3,-129.8 L3,-129.8 Q4.7,-129.8 4.6,-128 L3.5,-94.4 L1.3,-91.6 Z" fill="#0000ff"/></g><g transform="translate(431,475) rotate(311.25)"><rect x="-1" y="-92" width="2" height="5" fill="#c8ecf8"/><path d="M-1.3,-91.6 L-3.5,-94.4 L-4.6,-128 Q-4.7,-129.8 -3,-129.8 L3,-129.8 Q4.7,-129.8 4.6,-128 L3.5,-94.4 L1.3,-91.6 Z" fill="#8b0000"/></g><g transform="translate(431,475) rotate(318.75)"><rect x="-1" y="-92" width="2" height="5" fill="#c8ecf8"/><path d="M-1.3,-91.6 L-3.5,-94.4 L-4.6,-128 Q-4.7,-129.8 -3,-129.8 L3,-129.8 Q4.7,-129.8 4.6,-128 L3.5,-94.4 L1.3,-91.6 Z" fill="#8b0000"/></g><g transform="translate(431,475) rotate(326.25)"><rect x="-1" y="-92" width="2" height="5" fill="#c8ecf8"/><path d="M-1.3,-91.6 L-3.5,-94.4 L-4.6,-128 Q-4.7,-129.8 -3,-129.8 L3,-129.8 Q4.7,-129.8 4.6,-128 L3.5,-94.4 L1.3,-91.6 Z" fill="#00ff00"/></g><g transform="translate(431,475) rotate(333.75)"><rect x="-1" y="-92" width="2" height="5" fill="#c8ecf8"/><path d="M-1.3,-91.6 L-3.5,-94.4 L-4.6,-128 Q-4.7,-129.8 -3,-129.8 L3,-129.8 Q4.7,-129.8 4.6,-128 L3.5,-94.4 L1.3,-91.6 Z" fill="#00ff00"/></g><g transform="translate(431,475) rotate(341.25)"><rect x="-1" y="-92" width="2" height="5" fill="#c8ecf8"/><path d="M-1.3,-91.6 L-3.5,-94.4 L-4.6,-128 Q-4.7,-129.8 -3,-129.8 L3,-129.8 Q4.7,-129.8 4.6,-128 L3.5,-94.4 L1.3,-91.6 Z" fill="#000080"/></g><g transform="translate(431,475) rotate(348.75)"><rect x="-1" y="-92" width="2" height="5" fill="#c8ecf8"/><path d="M-1.3,-91.6 L-3.5,-94.4 L-4.6,-128 Q-4.7,-129.8 -3,-129.8 L3,-129.8 Q4.7,-129.8 4.6,-128 L3.5,-94.4 L1.3,-91.6 Z" fill="#000080"/></g><g transform="translate(431,475) rotate(356.25)"><rect x="-1" y="-92" width="2" height="5" fill="#c8ecf8"/><path d="M-1.3,-91.6 L-3.5,-94.4 L-4.6,-128 Q-4.7,-129.8 -3,-129.8 L3,-129.8 Q4.7,-129.8 4.6,-128 L3.5,-94.4 L1.3,-91.6 Z" fill="#ff0000"/></g><path d="M431.00,386.60 A88.4,88.4 0 0 1 493.51,412.49 L488.49,417.51 A81.3,81.3 0 0 0 431.00,393.70 Z" fill="#ffc34c"/><path d="M493.51,412.49 A88.4,88.4 0 0 1 519.40,475.00 L512.30,475.00 A81.3,81.3 0 0 0 488.49,417.51 Z" fill="#ff6a00"/><path d="M519.40,475.00 A88.4,88.4 0 0 1 493.51,537.51 L488.49,532.49 A81.3,81.3 0 0 0 512.30,475.00 Z" fill="#ffc34c"/><path d="M493.51,537.51 A88.4,88.4 0 0 1 431.00,563.40 L431.00,556.30 A81.3,81.3 0 0 0 488.49,532.49 Z" fill="#ff6a00"/><path d="M431.00,563.40 A88.4,88.4 0 0 1 368.49,537.51 L373.51,532.49 A81.3,81.3 0 0 0 431.00,556.30 Z" fill="#ffc34c"/><path d="M368.49,537.51 A88.4,88.4 0 0 1 342.60,475.00 L349.70,475.00 A81.3,81.3 0 0 0 373.51,532.49 Z" fill="#ff6a00"/><path d="M342.60,475.00 A88.4,88.4 0 0 1 368.49,412.49 L373.51,417.51 A81.3,81.3 0 0 0 349.70,475.00 Z" fill="#ffc34c"/><path d="M368.49,412.49 A88.4,88.4 0 0 1 431.00,386.60 L431.00,393.70 A81.3,81.3 0 0 0 373.51,417.51 Z" fill="#ff6a00"/><circle cx="431" cy="475" r="44.8" fill="#a9a9a9"/></svg><svg style="position:absolute;left:626px;top:240.5px" width="384" height="469.5" viewBox="626 240.5 384 469.5"><rect x="667" y="251.8" width="302.6" height="447.2" fill="#004660"/><rect x="673.6" y="282.4" width="289.2" height="386.2" fill="#6dbcd8"/><rect x="770" y="282.4" width="96.8" height="386.2" fill="#676767"/><rect x="770" y="420.8" width="96.8" height="109.5" fill="#a8a8a8"/><rect x="770" y="366.6" width="96.8" height="1.2" fill="#737b80"/><rect x="770" y="583.2" width="96.8" height="1.2" fill="#737b80"/><rect x="673.6" y="457.4" width="96.4" height="36.7" fill="#676767"/><rect x="866.8" y="457.4" width="96" height="36.7" fill="#676767"/><rect x="673.6" y="430.2" width="24" height="27.2" fill="#2e2e2e"/><path d="M673.6,430.2 L697.6,457.4 M697.6,430.2 L673.6,457.4" stroke="#dcdcdc" stroke-width="1"/><rect x="673.6" y="494.1" width="24" height="26.8" fill="#2e2e2e"/><path d="M673.6,494.1 L697.6,520.9 M697.6,494.1 L673.6,520.9" stroke="#dcdcdc" stroke-width="1"/><rect x="938.8" y="430.2" width="24" height="27.2" fill="#2e2e2e"/><path d="M938.8,430.2 L962.8,457.4 M962.8,430.2 L938.8,457.4" stroke="#dcdcdc" stroke-width="1"/><rect x="938.8" y="494.1" width="24" height="26.8" fill="#2e2e2e"/><path d="M938.8,494.1 L962.8,520.9 M962.8,494.1 L938.8,520.9" stroke="#dcdcdc" stroke-width="1"/><line x1="626" y1="475.3" x2="1010" y2="475.3" stroke="#3a3a3a" stroke-width="1.1" stroke-dasharray="6.6,2.3,1.3,2.7" opacity="0.75"/><rect x="737.5" y="316.1" width="161.2" height="46.2" fill="#8b0000"/><rect x="737.5" y="316.1" width="14.5" height="46.2" fill="#ff0000"/><rect x="884.2" y="316.1" width="14.5" height="46.2" fill="#ff0000"/><path d="M870.9,357.6 L884.8,330.20000000000005 L893.4,338.8 L907.6,320.90000000000003 L893.8,348.40000000000003 L885.2,339.8 Z" fill="#ffff00"/><rect x="737.5" y="588.5" width="161.2" height="46.2" fill="#8b0000"/><rect x="737.5" y="588.5" width="14.5" height="46.2" fill="#ff0000"/><rect x="884.2" y="588.5" width="14.5" height="46.2" fill="#ff0000"/><path d="M870.9,630.0 L884.8,602.6 L893.4,611.2 L907.6,593.3 L893.8,620.8 L885.2,612.2 Z" fill="#ffff00"/></svg><svg style="position:absolute;left:1010px;top:210px" width="235" height="330" viewBox="1010 210 235 330"><path d="M1036.60,221.8 C1038.80,224.62 1038.50,226.88 1036.80,229.13 C1035.10,231.39 1034.70,233.36 1037.30,235.90" fill="none" stroke="#d6f1fb" stroke-width="1.2" stroke-linecap="round"/><path d="M1040.90,221.8 C1043.10,224.62 1042.80,226.88 1041.10,229.13 C1039.40,231.39 1039.00,233.36 1041.60,235.90" fill="none" stroke="#d6f1fb" stroke-width="1.2" stroke-linecap="round"/><path d="M1045.20,221.8 C1047.40,224.62 1047.10,226.88 1045.40,229.13 C1043.70,231.39 1043.30,233.36 1045.90,235.90" fill="none" stroke="#d6f1fb" stroke-width="1.2" stroke-linecap="round"/><rect x="1032.3" y="237" width="16.8" height="1.4" fill="#d6f1fb"/><path d="M1083.6,238.6 V231.2 A7.4,7.4 0 0 1 1091,238.6 Z" fill="#222"/><g stroke="#333" stroke-width="1.1"><line x1="1083.9" y1="221" x2="1083.9" y2="229.5"/><line x1="1087.8" y1="230.2" x2="1092.8" y2="223.4"/><line x1="1092" y1="234.8" x2="1099.8" y2="229.6"/><line x1="1093" y1="238.4" x2="1102" y2="238.4"/></g><path d="M1136.8,222.8 H1141.6 L1144.4,227.4 L1147.2,222.8 H1152 L1147,230.2 L1152.2,237.8 H1147.2 L1144.4,233.2 L1141.6,237.8 H1136.6 L1141.8,230.2 Z" fill="#262626"/><line x1="1019.2" y1="277" x2="1082.5" y2="277" stroke="#a8a8a8" stroke-width="1.4"/><line x1="1173.2" y1="277" x2="1237.2" y2="277" stroke="#a8a8a8" stroke-width="1.4"/><rect x="1080.5" y="294.7" width="34" height="20.8" fill="#00a8e0" stroke="#8c8c8c" stroke-width="1"/><path d="M1092.90,299.2 C1095.10,301.44 1094.80,303.23 1093.10,305.02 C1091.40,306.82 1091.00,308.38 1093.60,310.40" fill="none" stroke="#e8f8ff" stroke-width="1.0" stroke-linecap="round"/><path d="M1097.00,299.2 C1099.20,301.44 1098.90,303.23 1097.20,305.02 C1095.50,306.82 1095.10,308.38 1097.70,310.40" fill="none" stroke="#e8f8ff" stroke-width="1.0" stroke-linecap="round"/><path d="M1101.10,299.2 C1103.30,301.44 1103.00,303.23 1101.30,305.02 C1099.60,306.82 1099.20,308.38 1101.80,310.40" fill="none" stroke="#e8f8ff" stroke-width="1.0" stroke-linecap="round"/><rect x="1090.5" y="311.2" width="13.2" height="1.2" fill="#e8f8ff"/><circle cx="1090.9" cy="311.8" r="0.9" fill="#e8f8ff"/><circle cx="1103.4" cy="311.8" r="0.9" fill="#e8f8ff"/><rect x="1135.7" y="294.7" width="34" height="20.8" fill="#fff" stroke="#8c8c8c" stroke-width="1.4"/><g transform="translate(1152.1,304.9) rotate(0)"><path d="M-0.4,-2.2 C-2.3,-3 -2.6,-5.4 -1.8,-6.1 C-0.4,-7 2.9,-6.8 3.2,-5.7 C3.4,-4.5 1.4,-2.6 0.4,-2.2 Z" fill="#1e1e1e"/></g><g transform="translate(1152.1,304.9) rotate(90)"><path d="M-0.4,-2.2 C-2.3,-3 -2.6,-5.4 -1.8,-6.1 C-0.4,-7 2.9,-6.8 3.2,-5.7 C3.4,-4.5 1.4,-2.6 0.4,-2.2 Z" fill="#1e1e1e"/></g><g transform="translate(1152.1,304.9) rotate(180)"><path d="M-0.4,-2.2 C-2.3,-3 -2.6,-5.4 -1.8,-6.1 C-0.4,-7 2.9,-6.8 3.2,-5.7 C3.4,-4.5 1.4,-2.6 0.4,-2.2 Z" fill="#1e1e1e"/></g><g transform="translate(1152.1,304.9) rotate(270)"><path d="M-0.4,-2.2 C-2.3,-3 -2.6,-5.4 -1.8,-6.1 C-0.4,-7 2.9,-6.8 3.2,-5.7 C3.4,-4.5 1.4,-2.6 0.4,-2.2 Z" fill="#1e1e1e"/></g><circle cx="1152.2" cy="304.9" r="0.9" fill="#2a2a2a"/><rect x="1018" y="334.2" width="220" height="1.7" fill="#a9a9a9"/><rect x="1018.8" y="350.5" width="218.8" height="42.79999999999999" fill="#e6e6e6" stroke="#8e8e8e" stroke-width="1.5"/><rect x="1019.5" y="351.3" width="217.4" height="15.199999999999989" fill="#c0c0c0"/><rect x="1019.5" y="366.5" width="217.4" height="1" fill="#a0a0a0"/><rect x="1019.5" y="367.5" width="217.4" height="12.699999999999989" fill="#ffffff"/><rect x="1173" y="367.5" width="1" height="26.0" fill="#a0a0a0"/><rect x="1018.8" y="402.0" width="218.8" height="42.79999999999999" fill="#e6e6e6" stroke="#8e8e8e" stroke-width="1.5"/><rect x="1019.5" y="402.8" width="217.4" height="15.699999999999989" fill="#c0c0c0"/><rect x="1019.5" y="418.5" width="217.4" height="1" fill="#a0a0a0"/><rect x="1019.5" y="419.5" width="217.4" height="12.800000000000011" fill="#ffffff"/><rect x="1173" y="419.5" width="1" height="25.5" fill="#a0a0a0"/><path d="M1165.2,384.4 H1169 V382.5 L1171.5,385.2 L1169,387.9 V386.0 H1165.2 Z" fill="#fff" stroke="#555" stroke-width="0.7"/><path d="M1168.4,388.0 H1164.6 V386.2 L1162,389.09999999999997 L1164.6,391.8 V389.9 H1168.4 Z" fill="#111"/><path d="M1165.2,424.0 H1169 V422.1 L1171.5,424.8 L1169,427.5 V425.6 H1165.2 Z" fill="#fff" stroke="#555" stroke-width="0.7"/><path d="M1168.4,427.6 H1164.6 V425.8 L1162,428.7 L1164.6,431.40000000000003 V429.5 H1168.4 Z" fill="#111"/><rect x="1086.6" y="456.6" width="35" height="21" fill="#fff" stroke="#8c8c8c" stroke-width="1.3"/><path d="M1096,464.8 L1102.5,472.3 L1111.3,461.2" fill="none" stroke="#333" stroke-width="1.3"/><rect x="1135.5" y="456.6" width="34" height="21" fill="#fff" stroke="#8c8c8c" stroke-width="1.3"/><path d="M1146.2,468.2 A6.2,6.2 0 1 0 1152.6,462" fill="none" stroke="#333" stroke-width="1.4"/><path d="M1149.4,462.2 L1154,459.4 L1154,465 Z" fill="#333"/><rect x="1018" y="497" width="220" height="1.8" fill="#b4b4b4"/><rect x="1114" y="509.2" width="34.4" height="20.8" fill="#fff" stroke="#8c8c8c" stroke-width="1.3"/><rect x="1124.4" y="512.2" width="9.8" height="14.8" rx="1.2" fill="#fff" stroke="#666" stroke-width="1.25"/><rect x="1126.2" y="517.5" width="5.6" height="7.2" fill="#d2d2d2"/><g stroke="#f4f4f4" stroke-width="0.5"><line x1="1126" y1="519.4" x2="1132" y2="519.4"/><line x1="1126" y1="521.3" x2="1132" y2="521.3"/><line x1="1126" y1="523.1" x2="1132" y2="523.1"/></g><path d="M1131.2,520 H1134.6 V518.3 L1137.6,521.2 L1134.6,524.1 V522.4 H1131.2 Z" fill="#2a2a2a"/></svg><div style="left:1027.10px;top:244.80px;font-size:9.8px;line-height:9.8px;color:#ffffff;font-weight:normal;white-space:nowrap;transform-origin:0 0;transform:scaleX(0.9750);">Fluidic</div><div style="left:1072.30px;top:244.80px;font-size:9.8px;line-height:9.8px;color:#333;font-weight:normal;white-space:nowrap;transform-origin:0 0;transform:scaleX(0.9891);">Radiation</div><div style="left:1127.00px;top:244.80px;font-size:9.8px;line-height:9.8px;color:#333;font-weight:normal;white-space:nowrap;transform-origin:0 0;transform:scaleX(0.9008);">X-Factor</div><div style="left:1084.70px;top:272.69px;font-size:11px;line-height:11px;color:#333;font-weight:normal;white-space:nowrap;transform-origin:0 0;transform:scaleX(1.0095);">Convection mode</div><div style="left:1095.40px;top:353.64px;font-size:10.7px;line-height:10.7px;color:#1f1f1f;font-weight:normal;white-space:nowrap;transform-origin:0 0;transform:scaleX(0.9102);-webkit-text-stroke:0.4px #1f1f1f;">CONVECTION</div><div style="left:1021.00px;top:369.00px;font-size:9.8px;line-height:9.8px;color:#2a2a2a;font-weight:normal;white-space:nowrap;transform-origin:0 0;transform:scaleX(1.0299);">Machine orientation</div><div style="left:1175.00px;top:369.00px;font-size:9.8px;line-height:9.8px;color:#2a2a2a;font-weight:normal;white-space:nowrap;transform-origin:0 0;transform:scaleX(1.0016);">Horizontal</div><div style="left:1021.00px;top:382.70px;font-size:9.8px;line-height:9.8px;color:#2a2a2a;font-weight:normal;white-space:nowrap;transform-origin:0 0;transform:scaleX(1.0096);">Altitude (m)</div><div style="left:1175.00px;top:382.70px;font-size:9.8px;line-height:9.8px;color:#2a2a2a;font-weight:normal;white-space:nowrap;transform-origin:0 0;transform:scaleX(0.8892);">0.0</div><div style="left:1085.00px;top:405.44px;font-size:10.7px;line-height:10.7px;color:#1f1f1f;font-weight:normal;white-space:nowrap;transform-origin:0 0;transform:scaleX(0.8889);-webkit-text-stroke:0.4px #1f1f1f;">COOLING CIRCUIT</div><div style="left:1021.00px;top:420.70px;font-size:9.8px;line-height:9.8px;color:#2a2a2a;font-weight:normal;white-space:nowrap;transform-origin:0 0;transform:scaleX(1.0018);">Fluid debit (L/mn)</div><div style="left:1175.00px;top:420.70px;font-size:9.8px;line-height:9.8px;color:#2a2a2a;font-weight:normal;white-space:nowrap;transform-origin:0 0;transform:scaleX(0.9183);">9.996 E-1</div><div style="left:1021.00px;top:434.40px;font-size:9.8px;line-height:9.8px;color:#2a2a2a;font-weight:normal;white-space:nowrap;transform-origin:0 0;transform:scaleX(0.9643);">Roughness (mm)</div><div style="left:1175.00px;top:434.40px;font-size:9.8px;line-height:9.8px;color:#2a2a2a;font-weight:normal;white-space:nowrap;transform-origin:0 0;transform:scaleX(0.9024);">2.0 E-3</div><svg style="position:absolute;left:0px;top:0px" width="1339" height="719" viewBox="0 0 1339 719"><line x1="291.2" y1="64.8" x2="291.2" y2="227" stroke="#000" stroke-width="1.15"/><circle cx="291.2" cy="227" r="4.5" fill="#000"/><circle cx="291.2" cy="37.8" r="27" fill="#fff" stroke="#000" stroke-width="2"/><path d="M291.41,50.10 L294.18,50.10 L294.18,27.55 L292.38,27.55 Q291.05,28.72 285.87,29.12 L285.87,31.80 Q289.21,31.18 291.41,32.46 Z" fill="#000"/><line x1="386.2" y1="64.8" x2="386.2" y2="227" stroke="#000" stroke-width="1.15"/><circle cx="386.2" cy="227" r="4.5" fill="#000"/><circle cx="386.2" cy="37.8" r="27" fill="#fff" stroke="#000" stroke-width="2"/><text x="386.20" y="50.099999999999994" font-size="31.5" text-anchor="middle" fill="#000">2</text><line x1="579.8" y1="64.5" x2="579.8" y2="290.3" stroke="#000" stroke-width="1.15"/><circle cx="579.8" cy="290.3" r="4.5" fill="#000"/><circle cx="579.8" cy="37.5" r="27" fill="#fff" stroke="#000" stroke-width="2"/><text x="579.80" y="49.8" font-size="31.5" text-anchor="middle" fill="#000">3</text><line x1="810.4" y1="64.5" x2="810.4" y2="287.2" stroke="#000" stroke-width="1.15"/><circle cx="810.4" cy="287.2" r="4.5" fill="#000"/><circle cx="810.4" cy="37.5" r="27" fill="#fff" stroke="#000" stroke-width="2"/><text x="810.40" y="49.8" font-size="31.5" text-anchor="middle" fill="#000">4</text><line x1="1042.9" y1="64.5" x2="1042.9" y2="218.5" stroke="#000" stroke-width="1.15"/><circle cx="1042.9" cy="218.5" r="4.5" fill="#000"/><circle cx="1042.9" cy="37.5" r="27" fill="#fff" stroke="#000" stroke-width="2"/><text x="1042.90" y="49.8" font-size="31.5" text-anchor="middle" fill="#000">5</text><line x1="1110.5" y1="296.5" x2="1266.5" y2="252.9" stroke="#000" stroke-width="1.15"/><circle cx="1110.5" cy="296.5" r="4.5" fill="#000"/><line x1="1168.6" y1="304.3" x2="1266.5" y2="312.0" stroke="#000" stroke-width="1.15"/><circle cx="1168.6" cy="304.3" r="4.5" fill="#000"/><line x1="1186.4" y1="380.4" x2="1266.8" y2="379.3" stroke="#000" stroke-width="1.15"/><circle cx="1186.4" cy="380.4" r="4.5" fill="#000"/><line x1="1186.8" y1="439.3" x2="1267.0" y2="438.40000000000003" stroke="#000" stroke-width="1.15"/><circle cx="1186.8" cy="439.3" r="4.5" fill="#000"/><line x1="1169.2" y1="476.2" x2="1268.0" y2="503.40000000000003" stroke="#000" stroke-width="1.15"/><circle cx="1169.2" cy="476.2" r="4.5" fill="#000"/><line x1="1122.6" y1="476.2" x2="1268.0" y2="566.1" stroke="#000" stroke-width="1.15"/><circle cx="1122.6" cy="476.2" r="4.5" fill="#000"/><line x1="1147.1" y1="525.3" x2="1268.0" y2="627.3000000000001" stroke="#000" stroke-width="1.15"/><circle cx="1147.1" cy="525.3" r="4.5" fill="#000"/><circle cx="1293" cy="252.3" r="27" fill="#fff" stroke="#000" stroke-width="2"/><text x="1293.00" y="264.6" font-size="31.5" text-anchor="middle" fill="#000">6</text><circle cx="1293" cy="311.4" r="27" fill="#fff" stroke="#000" stroke-width="2"/><text x="1293.00" y="323.7" font-size="31.5" text-anchor="middle" fill="#000">7</text><circle cx="1293.3" cy="378.7" r="27" fill="#fff" stroke="#000" stroke-width="2"/><text x="1293.30" y="391.0" font-size="31.5" text-anchor="middle" fill="#000">8</text><circle cx="1293.5" cy="437.8" r="27" fill="#fff" stroke="#000" stroke-width="2"/><text x="1293.50" y="450.1" font-size="31.5" text-anchor="middle" fill="#000">9</text><circle cx="1294.5" cy="502.8" r="27" fill="#fff" stroke="#000" stroke-width="2"/><path d="M1285.95,515.10 L1288.72,515.10 L1288.72,492.55 L1286.92,492.55 Q1285.59,493.72 1280.41,494.12 L1280.41,496.80 Q1283.75,496.18 1285.95,497.46 Z" fill="#000"/><text x="1303.26" y="515.1" font-size="31.5" text-anchor="middle" fill="#000">0</text><circle cx="1294.5" cy="565.5" r="27" fill="#fff" stroke="#000" stroke-width="2"/><path d="M1285.95,577.80 L1288.72,577.80 L1288.72,555.25 L1286.92,555.25 Q1285.59,556.42 1280.41,556.82 L1280.41,559.50 Q1283.75,558.88 1285.95,560.16 Z" fill="#000"/><path d="M1303.47,577.80 L1306.24,577.80 L1306.24,555.25 L1304.44,555.25 Q1303.11,556.42 1297.93,556.82 L1297.93,559.50 Q1301.27,558.88 1303.47,560.16 Z" fill="#000"/><circle cx="1294.5" cy="626.7" r="27" fill="#fff" stroke="#000" stroke-width="2"/><path d="M1285.95,639.00 L1288.72,639.00 L1288.72,616.45 L1286.92,616.45 Q1285.59,617.62 1280.41,618.02 L1280.41,620.70 Q1283.75,620.08 1285.95,621.36 Z" fill="#000"/><text x="1303.26" y="639.0" font-size="31.5" text-anchor="middle" fill="#000">2</text></svg>
</body></html>
